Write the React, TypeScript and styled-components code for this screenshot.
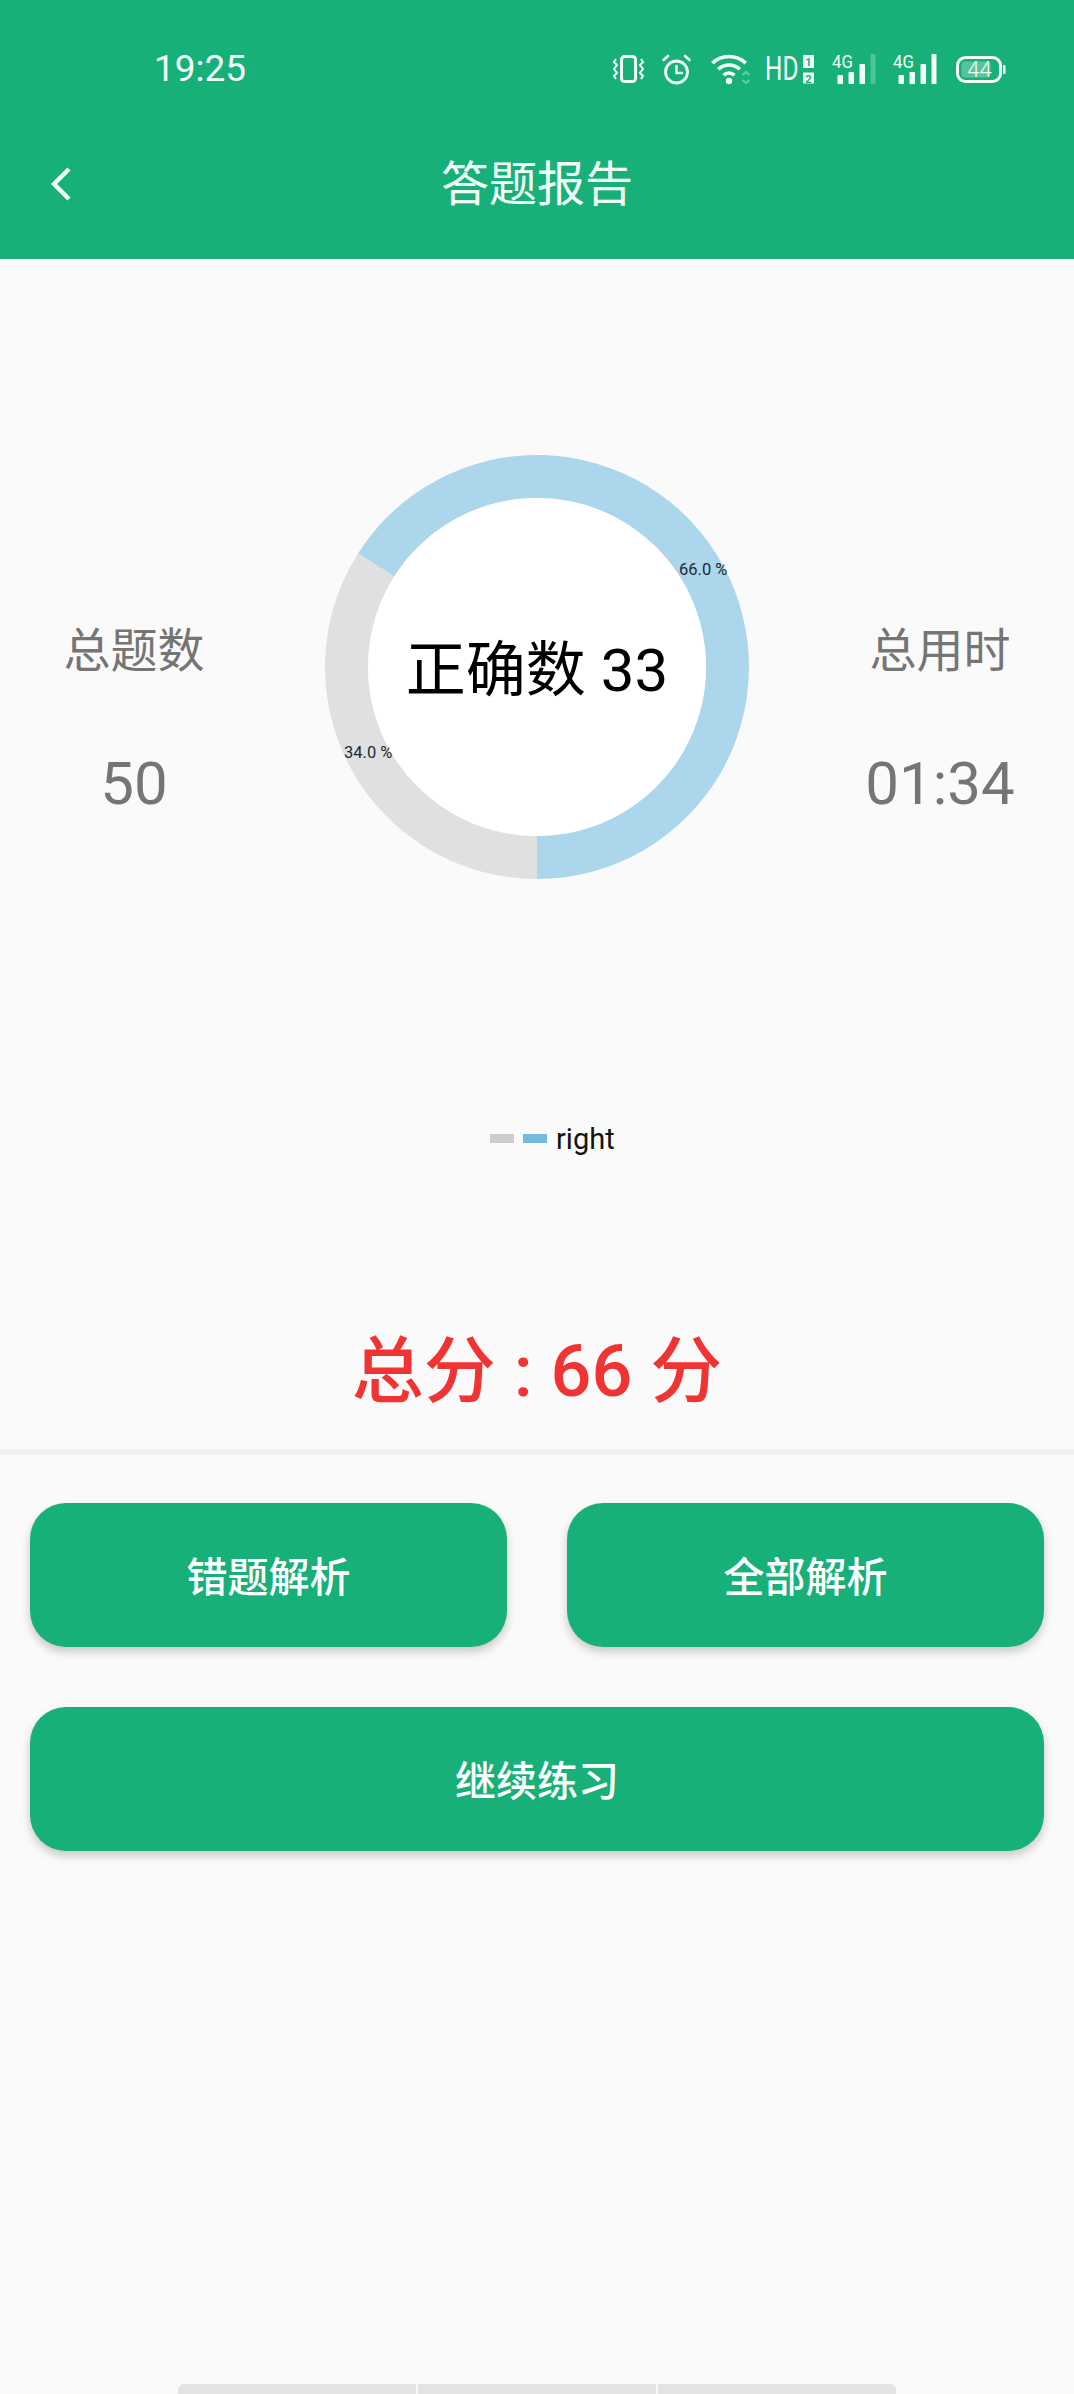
import React from "react";
import styled, { createGlobalStyle } from "styled-components";

const FONT = `Roboto, "Noto Sans CJK SC", sans-serif`;
const GREEN = "#18b079";

const Global = createGlobalStyle`
  html, body { margin: 0; padding: 0; background: #fafafa; }
  * { box-sizing: border-box; }
`;

const Page = styled.div`
  width: 1074px;
  height: 2394px;
  display: flex;
  flex-direction: column;
  overflow: hidden;
  background: #fafafa;
  font-family: ${FONT};
`;

const Header = styled.header`
  height: 259px;
  padding-top: 54px;
  background: ${GREEN};
  color: #f2fdf8;
`;

const StatusRow = styled.div`
  height: 30px;
  padding: 0 68px 0 154px;
  display: flex;
  align-items: center;
  justify-content: space-between;
`;

const Clock = styled.span`
  font-size: 37px;
  font-weight: 400;
  line-height: 30px;
`;

const StatusIcons = styled.div`
  display: flex;
  gap: 18px;
  svg {
    display: block;
    overflow: visible;
  }
  text {
    font-family: ${FONT};
  }
`;

const TitleBar = styled.div`
  margin-top: 53px;
  height: 96px;
  padding-left: 49px;
  display: grid;
  grid-template-columns: 1fr auto 1fr;
  align-items: center;
`;

const BackIcon = styled.svg`
  display: block;
`;

const Title = styled.h1`
  margin: 0 49px 0 0;
  font-size: 48px;
  font-weight: 400;
  line-height: 96px;
`;

const Report = styled.section`
  padding-top: 196px;
  display: grid;
  grid-template-columns: 268px 1fr 268px;
`;

const Stat = styled.div`
  padding-top: 166px;
  display: flex;
  flex-direction: column;
  align-items: center;
  color: #757575;
`;

const StatLabel = styled.div`
  font-size: 47px;
  line-height: 60px;
`;

const StatValue = styled.div`
  margin-top: 68px;
  font-size: 60px;
  line-height: 70px;
`;

const Donut = styled.div`
  position: relative;
  justify-self: center;
  width: 424px;
  height: 424px;
`;

const DonutSvg = styled.svg`
  display: block;
`;

const CenterText = styled.div`
  position: absolute;
  inset: 0 0 6px;
  display: flex;
  align-items: center;
  justify-content: center;
  font-size: 60px;
  color: #000;
  white-space: pre;
`;

const Percent = styled.span<{ $left: number; $top: number }>`
  position: absolute;
  left: ${(p) => p.$left}px;
  top: ${(p) => p.$top}px;
  font-size: 16.5px;
  line-height: 20px;
  color: #1f2a30;
  white-space: pre;
`;

const Legend = styled.div`
  margin-top: 240px;
  height: 40px;
  padding-left: 490px;
  display: flex;
  align-items: center;
`;

const Swatch = styled.span<{ $color: string }>`
  width: 24px;
  height: 9px;
  margin-right: 9px;
  margin-top: -1px;
  background: ${(p) => p.$color};
`;

const LegendText = styled.span`
  font-size: 29px;
  line-height: 40px;
  color: #111;
`;

const Total = styled.div`
  margin-top: 168px;
  height: 90px;
  text-align: center;
  font-size: 72px;
  font-weight: 500;
  line-height: 90px;
  color: #f03333;
  white-space: pre;
`;

const Divider = styled.hr`
  margin: 32px 0 0;
  height: 6px;
  border: 0;
  background: #eeeeee;
`;

const Actions = styled.div`
  padding: 48px 30px 0;
  display: grid;
  grid-template-columns: 1fr 1fr;
  column-gap: 60px;
  row-gap: 60px;
`;

const ActionButton = styled.button<{ $wide?: boolean }>`
  grid-column: ${(p) => (p.$wide ? "1 / -1" : "auto")};
  height: 144px;
  padding: 0 0 2px;
  border: 0;
  border-radius: 36px;
  background: ${GREEN};
  box-shadow: 0 5px 10px rgba(0, 0, 0, 0.2);
  color: #fff;
  font-family: ${FONT};
  font-size: 41px;
  font-weight: 500;
`;

const HomeBar = styled.div`
  margin: auto auto 0;
  width: 719px;
  height: 10px;
  display: flex;
  gap: 2px;
`;

const HomeSegment = styled.span<{ $pos: "start" | "mid" | "end" }>`
  flex: 1;
  background: #e3e3e3;
  border-top-left-radius: ${(p) => (p.$pos === "start" ? "6px" : "0")};
  border-top-right-radius: ${(p) => (p.$pos === "end" ? "6px" : "0")};
`;

const VibrateIcon = () => (
  <svg width="31" height="30" viewBox="0 0 31 30" fill="none" stroke="currentColor">
    <rect x="8.5" y="2.5" width="14" height="25" rx="3" strokeWidth="3" />
    <path d="M3 5 L1 8 L4 11 L1 15 L4 19 L1 22 L3 25" strokeWidth="2" />
    <path d="M28 5 L30 8 L27 11 L30 15 L27 19 L30 22 L28 25" strokeWidth="2" />
  </svg>
);

const AlarmIcon = () => (
  <svg width="30" height="30" viewBox="0 0 30 30" fill="none" stroke="currentColor" strokeLinecap="round">
    <circle cx="14.5" cy="18" r="11" strokeWidth="2.8" />
    <path d="M1.5 6 L6 2 M23 2 L27.5 6" strokeWidth="2.6" />
    <path d="M14.5 12 V19 H20" strokeWidth="2.4" />
  </svg>
);

const WifiIcon = () => (
  <svg width="37" height="30" viewBox="0 0 37 30" fill="none" stroke="currentColor">
    <g strokeWidth="3.6">
      <path d="M2.3 9.1 A24.5 24.5 0 0 1 35.7 9.1" />
      <path d="M8.1 15.3 A16 16 0 0 1 29.9 15.3" />
      <path d="M13.5 21.2 A8 8 0 0 1 24.5 21.2" />
    </g>
    <circle cx="19" cy="27" r="3.2" fill="currentColor" stroke="none" />
    <path d="M32.5 21 L36 18 L39.5 21 M32.5 26 L36 29 L39.5 26" strokeWidth="2.2" opacity="0.35" />
  </svg>
);

const HdIcon = () => (
  <svg width="49" height="30" viewBox="0 0 49 30">
    <text transform="translate(0 26) scale(0.74 1)" fontSize="33" fontWeight="400" fill="currentColor">
      HD
    </text>
    <rect x="38" y="1" width="11" height="13" rx="1" fill="currentColor" />
    <text x="43.5" y="12" fontSize="11" fontWeight="700" textAnchor="middle" fill={GREEN}>
      1
    </text>
    <rect x="38" y="18.5" width="11" height="11" rx="1" fill="currentColor" />
    <text x="43.5" y="28.5" fontSize="11" fontWeight="700" textAnchor="middle" fill={GREEN}>
      2
    </text>
  </svg>
);

const SignalIcon = ({ faded }: { faded?: boolean }) => (
  <svg width={faded ? 43 : 45} height="30" viewBox={`0 0 ${faded ? 43 : 45} 30`} fill="currentColor">
    <text transform="translate(0 14) scale(0.93 1)" fontSize="18">
      4G
    </text>
    <rect x="5.5" y="21" width="5.5" height="9" rx="1" />
    <rect x="16.5" y="18" width="5.5" height="12" rx="1" />
    <rect x="27.5" y="10" width="5.5" height="20" rx="1" />
    <rect x="38.5" y="0" width="5" height="30" rx="1" opacity={faded ? 0.25 : 1} />
  </svg>
);

const BatteryIcon = () => (
  <svg width="50" height="30" viewBox="0 0 50 30" fill="none">
    <rect x="1.5" y="3.5" width="43" height="24" rx="8" stroke="currentColor" strokeWidth="3" />
    <rect x="5.5" y="7.5" width="29" height="16" rx="4" fill="currentColor" opacity="0.28" />
    <rect x="47" y="11" width="2.5" height="9" rx="1" fill="currentColor" />
    <text x="23.5" y="23" fontSize="22" fontWeight="300" textAnchor="middle" fill="currentColor">
      44
    </text>
  </svg>
);

const arc = (from: number, to: number, outer: number, inner: number) => {
  const c = 212;
  const pt = (deg: number, r: number) => {
    const a = (deg * Math.PI) / 180;
    return `${(c + r * Math.sin(a)).toFixed(2)} ${(c - r * Math.cos(a)).toFixed(2)}`;
  };
  const large = to - from > 180 ? 1 : 0;
  return `M${pt(from, outer)} A${outer} ${outer} 0 ${large} 1 ${pt(to, outer)} L${pt(to, inner)} A${inner} ${inner} 0 ${large} 0 ${pt(from, inner)} Z`;
};

export default function App() {
  return (
    <Page>
      <Global />
      <Header>
        <StatusRow>
          <Clock>19:25</Clock>
          <StatusIcons>
            <VibrateIcon />
            <AlarmIcon />
            <WifiIcon />
            <HdIcon />
            <SignalIcon faded />
            <SignalIcon />
            <BatteryIcon />
          </StatusIcons>
        </StatusRow>
        <TitleBar>
          <BackIcon width="24" height="36" viewBox="0 0 24 36" fill="none" stroke="currentColor" strokeWidth="4.4">
            <path d="M20 2 L5 17 L20 32" />
          </BackIcon>
          <Title>答题报告</Title>
        </TitleBar>
      </Header>

      <Report>
        <Stat>
          <StatLabel>总题数</StatLabel>
          <StatValue>50</StatValue>
        </Stat>
        <Donut>
          <DonutSvg width="424" height="424" viewBox="0 0 424 424">
            <path d={arc(-57.6, 180, 212, 169)} fill="#acd6ec" />
            <path d={arc(180, 302.4, 212, 169)} fill="#e0e0e0" />
            <circle cx="212" cy="212" r="169" fill="#ffffff" />
          </DonutSvg>
          <CenterText>正确数 33</CenterText>
          <Percent $left={354} $top={105}>66.0 %</Percent>
          <Percent $left={19} $top={288}>34.0 %</Percent>
        </Donut>
        <Stat>
          <StatLabel>总用时</StatLabel>
          <StatValue>01:34</StatValue>
        </Stat>
      </Report>

      <Legend>
        <Swatch $color="#cccccc" />
        <Swatch $color="#74b9e0" />
        <LegendText>right</LegendText>
      </Legend>

      <Total>总分 : 66 分</Total>
      <Divider />

      <Actions>
        <ActionButton>错题解析</ActionButton>
        <ActionButton>全部解析</ActionButton>
        <ActionButton $wide>继续练习</ActionButton>
      </Actions>

      <HomeBar>
        <HomeSegment $pos="start" />
        <HomeSegment $pos="mid" />
        <HomeSegment $pos="end" />
      </HomeBar>
    </Page>
  );
}
